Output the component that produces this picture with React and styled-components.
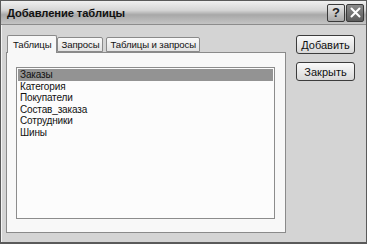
import React, { useState } from 'react';
import styled, { createGlobalStyle } from 'styled-components';

const Global = createGlobalStyle`
    html, body { margin:0; padding:0; background:#ffffff; }
    body { font-family:"Liberation Sans", Arial, sans-serif; }
`;

const Window = styled.div`
    width:367px;
    height:244px;
    box-sizing:border-box;
    border:1px solid #5a5a5a;
    border-bottom-width:2px;
    background:#d4d4d4;
    display:flex;
    flex-direction:column;
`;

const TitleBar = styled.div`
    height:23px;
    display:flex;
    align-items:center;
    justify-content:space-between;
    padding:0 2px 0 6px;
    background:linear-gradient(#f0f0f0 0%, #d6d6d6 40%, #a8a8a8 60%, #c4c4c4 100%);
    border-bottom:1px solid #8c8c8c;
`;

const Title = styled.span`
    font-weight:bold;
    font-size:11.2px;
    color:#111;
    letter-spacing:-0.1px;
`;

const TitleButtons = styled.div`
    display:flex;
    gap:1px;
`;

const TitleButton = styled.div`
    width:18px;
    height:18px;
    box-sizing:border-box;
    border:1px solid #3a3a3a;
    border-radius:2px;
    display:flex;
    align-items:center;
    justify-content:center;
    background:${p => p.$dark ? 'linear-gradient(#8a8a8a, #5c5c5c)' : 'linear-gradient(#e8e8e8, #a8a8a8)'};
    color:${p => p.$dark ? '#fff' : '#222'};
    font-weight:bold;
    font-size:13px;
`;

const Body = styled.div`
    flex:1;
    display:flex;
    padding:9px 9px 9px 4px;
    gap:10px;
    border-left:1px solid #f4f4f4;
`;

const TabArea = styled.div`
    width:280px;
    display:flex;
    flex-direction:column;
`;

const TabStrip = styled.div`
    display:flex;
    align-items:flex-end;
    height:18px;
    padding-left:1px;
`;

const Tab = styled.div`
    box-sizing:border-box;
    height:${p => p.$active ? '18px' : '15px'};
    margin-right:${p => p.$active ? '0' : '3px'};
    padding:0 ${p => p.$active ? '5px' : '3px'};
    display:flex;
    align-items:center;
    font-size:9.6px;
    letter-spacing:-0.1px;
    color:#111;
    background:${p => p.$active ? '#f8f8f8' : 'linear-gradient(#fafafa, #e2e2e2)'};
    border:1px solid #8a8a8a;
    border-bottom:${p => p.$active ? 'none' : '1px solid #8a8a8a'};
    border-radius:2px 2px 0 0;
    position:relative;
    z-index:${p => p.$active ? 2 : 1};
    margin-bottom:${p => p.$active ? '-1px' : '0'};
`;

const Panel = styled.div`
    flex:1;
    background:#f8f8f8;
    border:1px solid #8a8a8a;
    padding:14px 10px 13px 9px;
    display:flex;
`;

const ListBox = styled.div`
    flex:1;
    background:#fcfcfc;
    border:1px solid #8c8c8c;
    padding:1px;
    display:flex;
    flex-direction:column;
`;

const Row = styled.div`
    height:11.5px;
    line-height:11.5px;
    font-size:10px;
    letter-spacing:-0.15px;
    padding-left:2px;
    color:#111;
    background:${p => p.$selected ? '#939393' : 'transparent'};
`;

const Buttons = styled.div`
    display:flex;
    flex-direction:column;
    gap:8px;
    padding-top:1px;
`;

const Button = styled.button`
    width:59px;
    height:19px;
    box-sizing:border-box;
    border:1px solid #3c3c3c;
    border-radius:3px;
    background:linear-gradient(#fafafa, #d8d8d8);
    font-family:"Liberation Sans", Arial, sans-serif;
    font-size:11px;
    color:#111;
    padding:0;
`;

const CloseIcon = () => (
    <svg width="11" height="11" viewBox="0 0 11 11">
        <path d="M1.5 1.5 L9.5 9.5 M9.5 1.5 L1.5 9.5" stroke="#fff" strokeWidth="2" strokeLinecap="round" />
    </svg>
);

const items = ['Заказы', 'Категория', 'Покупатели', 'Состав_заказа', 'Сотрудники', 'Шины'];

const App = () => {
    const [selected, setSelected] = useState(0);
    return (
        <>
            <Global />
            <Window>
                <TitleBar>
                    <Title>Добавление таблицы</Title>
                    <TitleButtons>
                        <TitleButton>?</TitleButton>
                        <TitleButton $dark><CloseIcon /></TitleButton>
                    </TitleButtons>
                </TitleBar>
                <Body>
                    <TabArea>
                        <TabStrip>
                            <Tab $active>Таблицы</Tab>
                            <Tab>Запросы</Tab>
                            <Tab>Таблицы и запросы</Tab>
                        </TabStrip>
                        <Panel>
                            <ListBox>
                                {items.map((name, i) => (
                                    <Row key={name} $selected={i === selected} onClick={() => setSelected(i)}>{name}</Row>
                                ))}
                            </ListBox>
                        </Panel>
                    </TabArea>
                    <Buttons>
                        <Button>Добавить</Button>
                        <Button>Закрыть</Button>
                    </Buttons>
                </Body>
            </Window>
        </>
    );
};

export default App;
